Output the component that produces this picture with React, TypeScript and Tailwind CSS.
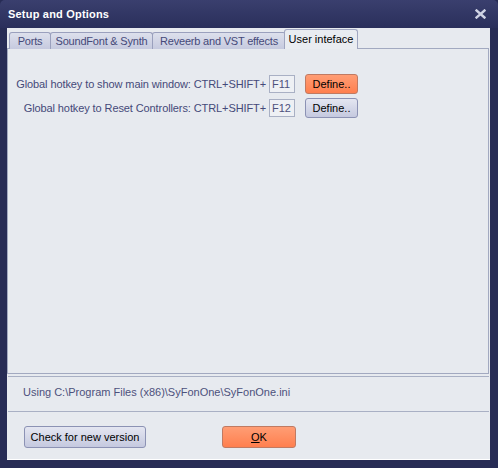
import React from "react";

const font = { fontFamily: '"Liberation Sans", Arial, sans-serif' };

const tabs = [
  { label: "Ports", w: "w-[42px]" },
  { label: "SoundFont & Synth", w: "w-[103px]" },
  { label: "Reveerb and VST effects", w: "w-[134px]" },
];

function Tab({ label, w }: { label: string; w: string }) {
  return (
    <div
      className={`${w} h-[17px] -mr-px flex items-center justify-center rounded-t-[3px] border border-b-0 border-[#9aa0bd] bg-gradient-to-b from-[#dde0ec] to-[#c6cadf] text-[11px] tracking-[-0.2px] text-[#454979]`}
    >
      {label}
    </div>
  );
}

function HotkeyRow({ label, keyName, hot }: { label: string; keyName: string; hot?: boolean }) {
  return (
    <>
      <div className="text-right text-[11px] tracking-[-0.1px] text-[#454979] leading-none">{label}</div>
      <div className="ml-[3px] w-[26px] h-[18px] border border-[#a9b0c4] bg-[#eef0f4] flex items-center pl-[2px] text-[11px] text-[#4d517c]">
        {keyName}
      </div>
      <button
        className={`ml-[10px] w-[53px] h-[20px] rounded-[3px] border text-[11px] text-black flex items-center justify-center ${
          hot
            ? "border-[#c07a62] bg-gradient-to-b from-[#ff9d74] to-[#ff7f4e]"
            : "border-[#8c92b4] bg-gradient-to-b from-[#e4e6f1] to-[#c5c9df]"
        }`}
      >
        Define..
      </button>
    </>
  );
}

export default function App() {
  return (
    <div style={font} className="w-[498px] h-[468px] bg-[#272c55] flex flex-col overflow-hidden">
      {/* title bar */}
      <div className="h-[28px] shrink-0 flex items-center justify-between pl-[8px] pr-[12px] bg-gradient-to-b from-[#3a3f6e] to-[#2a2f5b] rounded-t-[5px]">
        <span className="text-[11px] font-bold text-white tracking-[0.2px]">Setup and Options</span>
        <svg width="11" height="10" viewBox="0 0 11 10">
          <path d="M1.5 1.5 L9.5 8.5 M9.5 1.5 L1.5 8.5" stroke="#cfd3e4" strokeWidth="2.4" strokeLinecap="square" />
        </svg>
      </div>

      {/* client */}
      <div className="ml-[7px] mr-[8px] h-[432px] bg-[#e7eaef] flex flex-col border-b border-white">
        {/* tabs */}
        <div className="h-[20px] mt-[1px] pl-[2px] flex items-end relative z-10">
          {tabs.map((t) => (
            <Tab key={t.label} label={t.label} w={t.w} />
          ))}
          <div className="w-[74px] h-[20px] -ml-px flex items-center justify-center rounded-t-[3px] border border-b-0 border-[#a0a6c0] bg-[#e9ecf1] text-[11px] text-black pb-[1px]">
            User inteface
          </div>
        </div>

        {/* panel */}
        <div className="h-[326px] -mt-px mr-[1px] border border-[#a2a9c0] pt-[25px]">
          <div className="grid grid-cols-[258px_auto_auto_1fr] items-center gap-y-[4px]">
            <HotkeyRow label="Global hotkey to show main window: CTRL+SHIFT+" keyName="F11" hot />
            <div />
            <HotkeyRow label="Global hotkey to Reset Controllers: CTRL+SHIFT+" keyName="F12" />
            <div />
          </div>
        </div>

        {/* status */}
        <div className="mt-[2px] mr-[1px] ml-px h-[36px] border-y border-[#a9b0c4] flex items-center pl-[15px] pb-[3px] text-[11px] text-[#4d517c]">
          Using C:\Program Files (x86)\SyFonOne\SyFonOne.ini
        </div>

        {/* buttons */}
        <div className="flex-1 flex items-start pt-[14px] pl-[17px]">
          <button className="w-[122px] h-[22px] rounded-[3px] border border-[#8c92b4] bg-gradient-to-b from-[#e4e6f1] to-[#c5c9df] text-[11px] text-black">
            Check for new version
          </button>
          <button className="ml-[76px] w-[74px] h-[22px] rounded-[3px] border border-[#c07a62] bg-gradient-to-b from-[#ff9d74] to-[#ff7f4e] text-[11px] text-black">
            <span className="underline">O</span>K
          </button>
        </div>
      </div>
    </div>
  );
}
